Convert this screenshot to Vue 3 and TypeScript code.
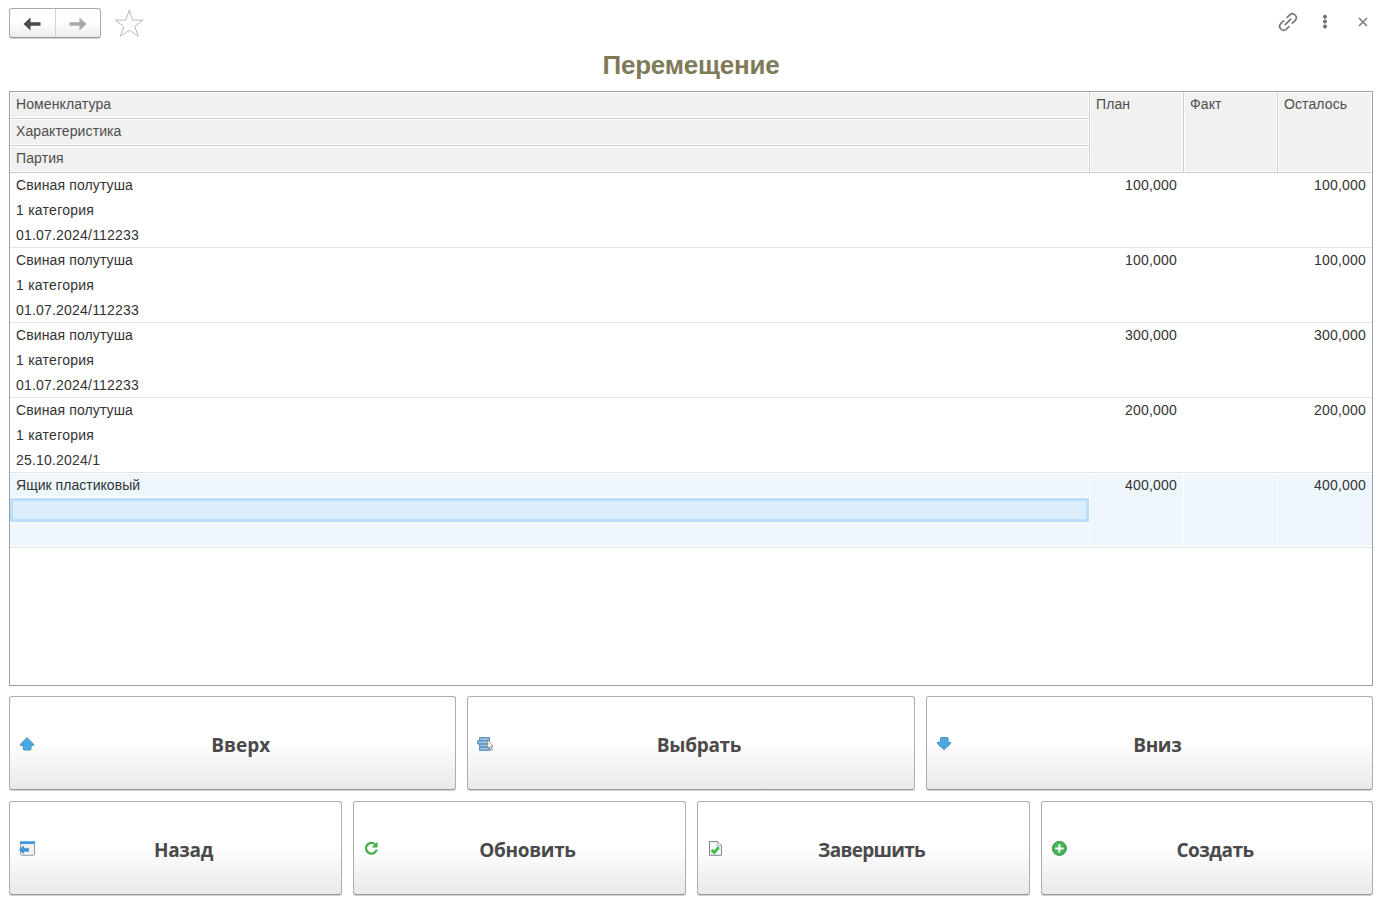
<script setup lang="ts">
interface Item {
  name: string
  kind: string
  batch: string
  plan: string
  fact: string
  left: string
}

interface Action {
  label: string
  icon: string
  tracking: number
}

const headers: string[] = ['Номенклатура', 'Характеристика', 'Партия']

const items: Item[] = [
  { name: 'Свиная полутуша', kind: '1 категория', batch: '01.07.2024/112233', plan: '100,000', fact: '', left: '100,000' },
  { name: 'Свиная полутуша', kind: '1 категория', batch: '01.07.2024/112233', plan: '100,000', fact: '', left: '100,000' },
  { name: 'Свиная полутуша', kind: '1 категория', batch: '01.07.2024/112233', plan: '300,000', fact: '', left: '300,000' },
  { name: 'Свиная полутуша', kind: '1 категория', batch: '25.10.2024/1', plan: '200,000', fact: '', left: '200,000' },
  { name: 'Ящик пластиковый', kind: '', batch: '', plan: '400,000', fact: '', left: '400,000' },
]
const selected = 4

const rows: Action[][] = [
  [
    { label: 'Вверх', icon: 'up', tracking: 0 },
    { label: 'Выбрать', icon: 'pick', tracking: -0.3 },
    { label: 'Вниз', icon: 'down', tracking: -0.4 },
  ],
  [
    { label: 'Назад', icon: 'back', tracking: -0.3 },
    { label: 'Обновить', icon: 'refresh', tracking: -0.35 },
    { label: 'Завершить', icon: 'finish', tracking: -0.7 },
    { label: 'Создать', icon: 'create', tracking: -0.5 },
  ],
]
</script>

<template>
  <div class="page">
    <header class="bar">
      <div class="nav">
        <button class="nav-btn" type="button">
          <svg width="18" height="14" viewBox="0 0 18 14"><path d="M0.5 7 7.5 0.5V5.3H17.5V8.7H7.5V13.5Z" fill="#4a4a4a" /></svg>
        </button>
        <button class="nav-btn" type="button">
          <svg width="18" height="14" viewBox="0 0 18 14"><path d="M17.5 7 10.5 0.5V5.3H0.5V8.7H10.5V13.5Z" fill="#a9a9a9" /></svg>
        </button>
      </div>
      <svg class="star" width="30" height="29" viewBox="0 0 30 29">
        <path d="M15.3 1.2 18.7 11.1H29.2L20.8 17.4 24.4 27.4 15.3 21.2 6.4 27.4 9.8 17.4 1.3 11.1H11.9Z" fill="#fff" stroke="#b4bac0" stroke-width="1" />
      </svg>
      <div class="tools">
        <svg width="20" height="20" viewBox="0 0 20 20" fill="none" stroke="#777" stroke-width="1.7" stroke-linecap="round">
          <path d="M9.2 5.4 11.8 2.8A3.9 3.9 0 0 1 17.3 8.3L14.3 11.1" />
          <path d="M5.5 8.9 2.7 11.7A3.9 3.9 0 0 0 8.2 17.2L11 14.5" />
          <path d="M7.2 12.6 12.7 7.2" />
        </svg>
        <svg width="6" height="16" viewBox="0 0 6 16" fill="#6e6e6e">
          <circle cx="3" cy="2.8" r="2" /><circle cx="3" cy="7.6" r="2" /><circle cx="3" cy="12.5" r="2" />
        </svg>
        <svg width="10" height="10" viewBox="0 0 10 10" stroke="#7c7c7c" stroke-width="1.6">
          <path d="M1 1 9 9M9 1 1 9" />
        </svg>
      </div>
    </header>

    <h1 class="title">Перемещение</h1>

    <section class="table">
      <div class="line head">
        <div class="stack">
          <div v-for="h in headers" :key="h" class="th">{{ h }}</div>
        </div>
        <div class="th">План</div>
        <div class="th">Факт</div>
        <div class="th">Осталось</div>
      </div>
      <div v-for="(item, i) in items" :key="i" class="line row" :class="{ active: i === selected }">
        <div class="stack">
          <div class="td name">{{ item.name }}</div>
          <div class="td kind" :class="{ focus: i === selected }">{{ item.kind }}</div>
          <div class="td">{{ item.batch }}</div>
        </div>
        <div class="td num">{{ item.plan }}</div>
        <div class="td num">{{ item.fact }}</div>
        <div class="td num">{{ item.left }}</div>
      </div>
    </section>

    <div v-for="(row, r) in rows" :key="r" class="actions" :class="{ four: row.length === 4 }">
      <button v-for="a in row" :key="a.label" class="action" type="button">
        <svg class="icon" width="16" height="16" viewBox="0 0 16 16">
          <path v-if="a.icon === 'up'" d="M8 1.7 14.6 8.2V9.3H12V13Q12 14 11 14H5.4Q4.4 14 4.4 13V9.3H1.4V8.2Z" fill="#48abe8" stroke="#4389b8" stroke-width="1" stroke-linejoin="round" />
          <path v-else-if="a.icon === 'down'" d="M8 13.6 14.6 7.6V6.4H12V2.6Q12 1.6 11 1.6H5.4Q4.4 1.6 4.4 2.6V6.4H1.4V7.6Z" fill="#48abe8" stroke="#4389b8" stroke-width="1" stroke-linejoin="round" />
          <g v-else-if="a.icon === 'pick'">
            <path d="M2.5 1.6H12.5V4.7H2.5ZM.6 4.7H11.5V7.9H.6ZM2.5 7.9H12.5V11.1H2.5ZM2.5 11.1H12.5V14.4H2.5Z" fill="#7db4e2" stroke="#6690b8" stroke-width="1" stroke-linejoin="round" />
            <path d="M4 3.3H11M2 6.3H10M4 9.5H10M4 12.8H11" stroke="#a6cbea" />
            <path d="M10.8 3.6V12.4L12.5 10.9 13.8 14.2 15.3 13.5 14.1 10.4H16Z" fill="#fff" stroke="#8a8a8a" stroke-width=".9" />
          </g>
          <g v-else-if="a.icon === 'back'">
            <rect x="1.5" y="1.5" width="14" height="13.8" rx="1" fill="#f1f1f1" stroke="#8c9cae" />
            <path d="M1 1.2H16V4H1Z" fill="#3c95dc" />
            <path d="M1 1.6H16" stroke="#64b4f0" />
            <path d="M.5 9.8 4.4 6.2V8.4H9.5V11.2H4.4V13.4Z" fill="#3b9be0" stroke="#3779ad" stroke-width=".7" />
          </g>
          <g v-else-if="a.icon === 'refresh'">
            <path d="M12 4.2A5.4 5.4 0 1 0 13.7 9.4" fill="none" stroke="#42ae47" stroke-width="2.2" />
            <path d="M14.5 1.8V7.4H8.6Z" fill="#42ae47" />
          </g>
          <g v-else-if="a.icon === 'finish'">
            <path d="M2.5 1.5H10.5L14.4 5.2V15.3H2.5Z" fill="#f5f7f9" stroke="#7c8792" />
            <path d="M10.3 1.7V5.4H14.2" fill="#fff" stroke="#9ba5af" stroke-width=".8" />
            <path d="M4.6 10 7.3 12.5 11.8 7.1" fill="none" stroke="#35bd48" stroke-width="2.7" />
          </g>
          <g v-else>
            <circle cx="8.4" cy="8.4" r="7" fill="#49b457" stroke="#35954a" />
            <path d="M8.4 4.2V12.6M4.2 8.4H12.6" stroke="#fff" stroke-width="2" />
          </g>
        </svg>
        <span class="label" :style="{ letterSpacing: a.tracking + 'px' }">{{ a.label }}</span>
      </button>
    </div>
  </div>
</template>

<style>
body {
  background: #fff;
}
</style>

<style scoped>
.page {
  box-sizing: border-box;
  width: 1391px;
  height: 905px;
  padding: 8px 18px 0 9px;
  overflow: hidden;
  font-family: "Liberation Sans", Arial, sans-serif;
  color: #333;
}
.bar {
  display: flex;
  height: 32px;
}
.nav {
  display: flex;
  box-sizing: border-box;
  width: 92px;
  height: 30px;
  border: 1px solid #aaa;
  border-bottom-color: #999;
  border-radius: 3px;
  background: linear-gradient(#fff 45%, #ebebeb);
  box-shadow: 0 1px 0 #d0d0d0;
}
.nav-btn {
  flex: 1;
  display: flex;
  align-items: center;
  justify-content: center;
  padding: 1px 0 0;
  border: 0;
  background: none;
}
.nav-btn + .nav-btn {
  border-left: 1px solid #d2d2d2;
}
.star {
  margin: 1px 0 0 13px;
}
.tools {
  display: flex;
  align-items: center;
  height: 28px;
  margin-left: auto;
  padding-right: 5px;
}
.tools svg + svg {
  margin-left: 24px;
}
.tools svg + svg + svg {
  margin-left: 30px;
}
.title {
  height: 51px;
  margin: 0;
  line-height: 50px;
  font-size: 26px;
  font-weight: 700;
  letter-spacing: -0.2px;
  text-align: center;
  color: #7f7a58;
}
.table {
  box-sizing: border-box;
  height: 595px;
  border: 1px solid #a0a0a0;
  font-size: 14px;
  letter-spacing: 0.2px;
}
.line {
  display: grid;
  grid-template-columns: 1080px 94px 94px 94px;
}
.head {
  height: 81px;
  color: #4d4d4d;
  letter-spacing: 0.1px;
}
.th {
  box-sizing: border-box;
  padding-left: 5px;
  border: 1px solid #fff;
  background: #f1f1f1;
  line-height: 22px;
}
.head > .th,
.head .stack {
  border-right: 1px solid #cbcbcb;
  border-bottom: 1px solid #cbcbcb;
}
.head > .th {
  box-shadow: inset -1px -1px 0 #fff;
}
.head > .th:last-child {
  border-right-color: #fff;
  box-shadow: inset 0 -1px 0 #fff;
}
.head .stack .th {
  height: 26px;
}
.head .stack .th + .th {
  height: 27px;
  border-top: 1px solid #cbcbcb;
  box-shadow: inset 0 1px 0 #fff;
  line-height: 24px;
}
.row {
  box-sizing: border-box;
  height: 75px;
  border-bottom: 1px solid #e3e3e3;
}
.td {
  box-sizing: border-box;
  height: 25px;
  padding: 0 6px;
  line-height: 24px;
}
.td.name {
  letter-spacing: 0.12px;
}
.td.kind {
  letter-spacing: 0.25px;
}
.td.num {
  height: 74px;
  padding-right: 7px;
  text-align: right;
}
.td.num:last-child {
  padding-right: 6px;
}
.active .td {
  border: solid #fff;
  border-width: 1px 1px 1px 0;
  background: #eef6fe;
  line-height: 22px;
}
.active .td.name {
  letter-spacing: 0.03px;
}
.active .td.num {
  padding-right: 6px;
}
.active .td.num:last-child {
  border-right: 0;
  padding-right: 6px;
}
.active .stack .td:last-child {
  height: 24px;
  border-top: 0;
}
.active .stack .td.focus {
  border-top: 0;
  background: #dceefc;
  box-shadow: inset 0 0 0 3px #b8defb;
}
.actions {
  display: grid;
  grid-template-columns: repeat(3, 1fr);
  gap: 11px;
  margin-top: 10px;
}
.actions.four {
  grid-template-columns: repeat(3, 333px) 1fr;
  margin-top: 11px;
}
.action {
  display: flex;
  align-items: center;
  box-sizing: border-box;
  height: 94px;
  padding: 0 9px;
  border: 1px solid #adadad;
  border-bottom-color: #9a9a9a;
  border-radius: 3px;
  background: linear-gradient(#fff 48%, #e9e9e9);
  box-shadow: 0 1px 0 #d0d0d0;
  color: #4a4a4a;
  font: 700 19px "Open Sans", "Noto Sans", sans-serif;
}
.icon {
  flex: none;
  margin-top: 2px;
}
.four .icon {
  margin-top: 0;
}
.label {
  flex: 1;
  padding-top: 4px;
  text-align: center;
}
</style>
